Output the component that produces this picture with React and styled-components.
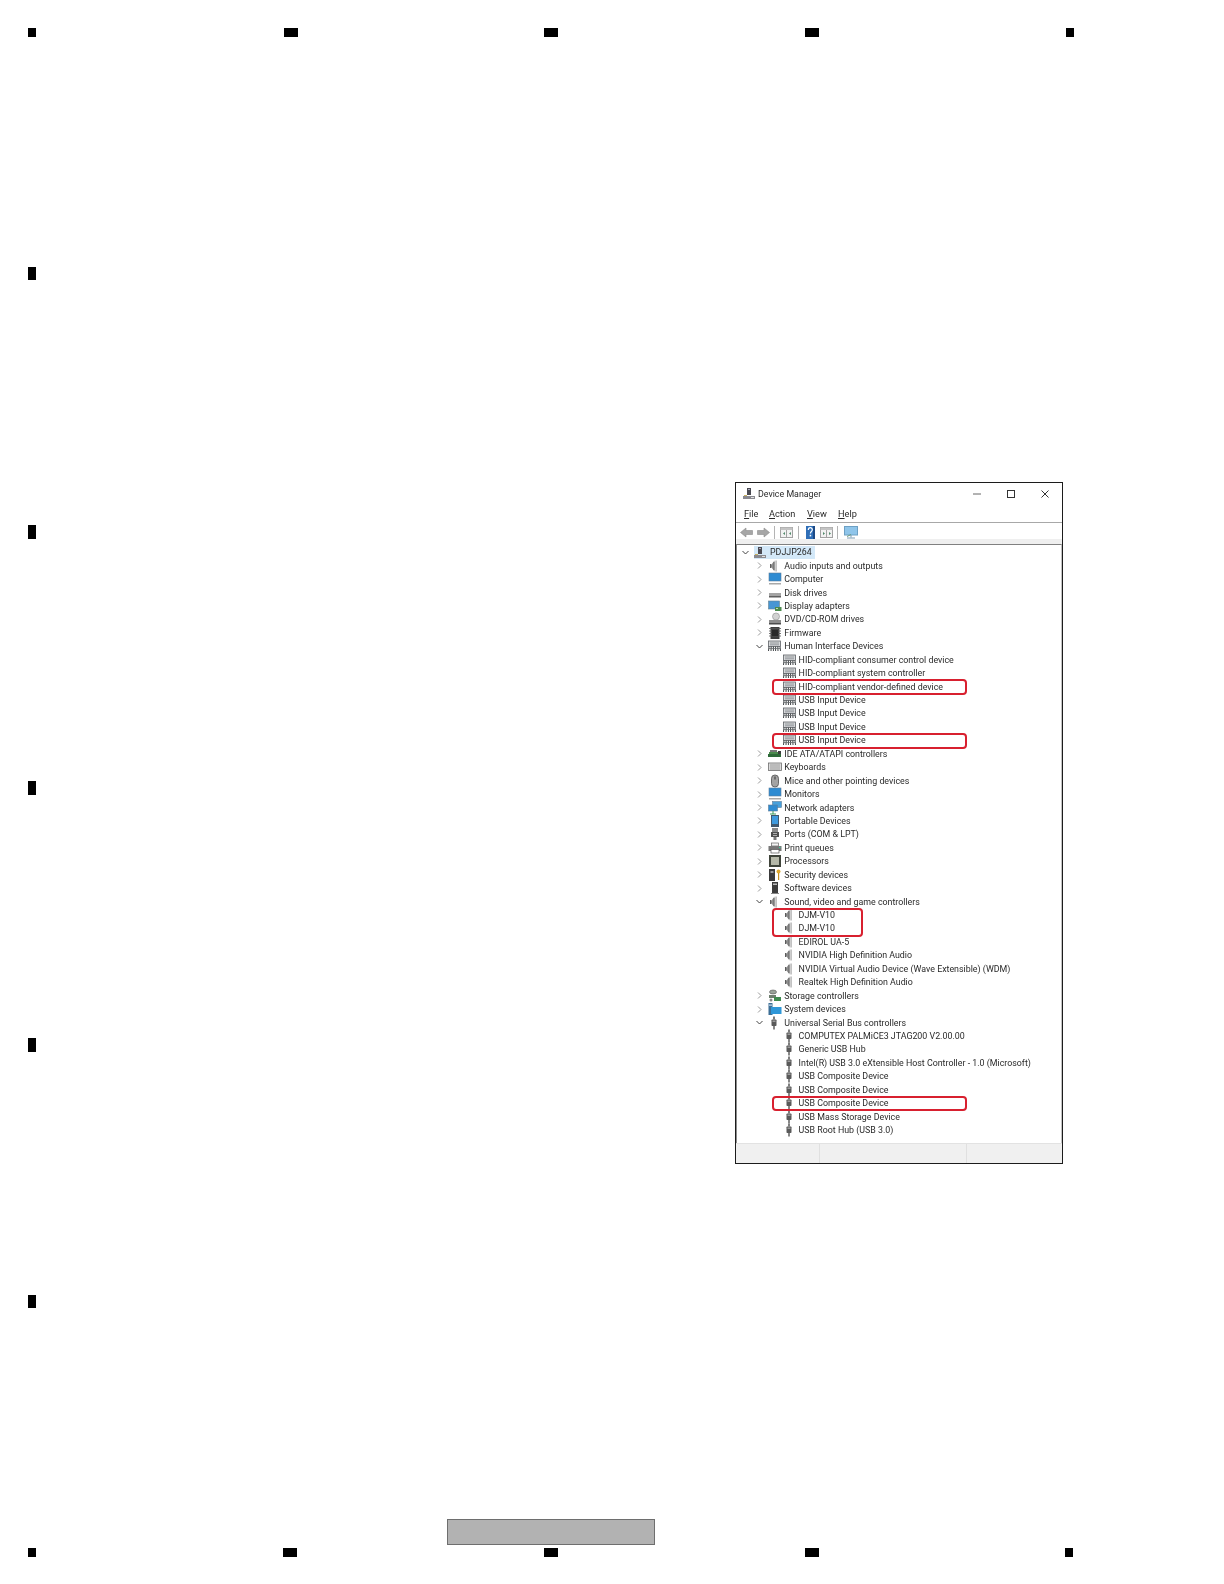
import React from 'react';
import styled, { createGlobalStyle } from 'styled-components';

const Global = createGlobalStyle`
    html, body {
        margin: 0;
        padding: 0;
        background: #fff;
    }
`;

const Sheet = styled.div`
    width: 1224px;
    height: 1584px;
    padding: 28px 0 0 28px;
    box-sizing: border-box;
    overflow: hidden;
    background: #fff;
`;

const MarkRow = styled.div`
    display: grid;
    grid-template-columns: ${props => props.$cols};
    justify-items: start;
`;

const Mark = styled.div`
    width: ${props => props.$w}px;
    height: ${props => props.$h}px;
    margin-top: ${props => props.$top || 0}px;
    background: #000;
`;

const Middle = styled.div`
    display: flex;
    align-items: flex-start;
    height: 1482px;
`;

const LeftRail = styled.div`
    width: 8px;
    flex: none;
`;

const PageBar = styled.div`
    width: 208px;
    height: 26px;
    margin: 0 0 3px 419px;
    box-sizing: border-box;
    background: #b2b2b2;
    border: 1px solid #6e6e6e;
`;

const Window = styled.div`
    width: 328px;
    height: 682px;
    margin: 445px 0 0 699px;
    flex: none;
    box-sizing: border-box;
    display: flex;
    flex-direction: column;
    border: 1px solid #1c1c1c;
    background: #fff;
    font-family: "Roboto", "Liberation Sans", sans-serif;
    font-size: 8.85px;
    color: #2a2a2a;
    filter: blur(0.35px);
`;

const TitleBar = styled.div`
    height: 21px;
    flex: none;
    display: flex;
    align-items: center;
    padding: 0 0 0 7px;
    gap: 3px;
`;

const Title = styled.span`
    flex: 1;
`;

const Controls = styled.div`
    display: flex;
    align-items: center;
    gap: 26px;
    padding-right: 13px;
`;

const MenuBar = styled.div`
    height: 18px;
    flex: none;
    display: flex;
    align-items: center;
    padding-left: 8px;
`;

const MenuItem = styled.span`
    width: ${props => props.$w}px;
    font-size: 9.2px;
    u {
        text-underline-offset: 1px;
    }
`;

const ToolBar = styled.div`
    height: 17px;
    flex: none;
    box-sizing: border-box;
    display: flex;
    align-items: center;
    gap: 4px;
    padding: 2px 0 0 4px;
    border-top: 1px solid #a8a8a8;
`;

const ToolSlot = styled.div`
    flex: none;
    margin-left: ${props => props.$ml || 0}px;
`;

const ToolSep = styled.div`
    width: 1px;
    height: 13px;
    flex: none;
    margin-left: ${props => props.$ml || 0}px;
    background: #b4b4b4;
`;

const ToolGap = styled.div`
    height: 5px;
    flex: none;
    background: #efefef;
`;

const TreePanel = styled.div`
    flex: 1;
    min-height: 0;
    box-sizing: border-box;
    border-top: 1.5px solid #808080;
    border-left: 1px solid #8c8c8c;
    border-right: 1px solid #c4c4c4;
    padding-top: 0.5px;
`;

const Row = styled.div`
    height: 13.44px;
    display: flex;
    align-items: center;
    white-space: nowrap;
    padding-left: ${props => 5 + props.$level * 14.3}px;
`;

const ChevronSlot = styled.span`
    width: 12px;
    flex: none;
    display: flex;
    align-items: center;
`;

const Label = styled.span`
    display: flex;
    align-items: center;
    height: 13.44px;
    gap: 2px;
    padding-right: ${props => (props.$selected ? 3 : 0)}px;
    background: ${props => (props.$selected ? '#d3e8f8' : 'transparent')};
`;

const IconSlot = styled.span`
    width: 14px;
    height: 13px;
    flex: none;
    display: flex;
    align-items: center;
    justify-content: flex-start;
`;

const RingGroup = styled.div`
    position: relative;
`;

const Ring = styled.div`
    position: absolute;
    top: -0.7px;
    bottom: -1.5px;
    left: 35px;
    width: ${props => props.$w}px;
    box-sizing: border-box;
    border: 2px solid #d8202f;
    border-radius: 4px;
`;

const StatusBar = styled.div`
    height: 19px;
    flex: none;
    display: grid;
    grid-template-columns: 84px 147px 1fr;
    background: #f0f0f0;
    border-top: 1px solid #e2e2e2;
`;

const StatusCell = styled.div`
    border-right: 1px solid #e0e0e0;
    &:last-child {
        border-right: none;
    }
`;

const Svg = ({ children, w = 14, h = 14 }) => (
    <svg width={w} height={h} viewBox={`0 0 ${w} ${h}`} style={{ display: 'block', flex: 'none' }}>
        {children}
    </svg>
);

const Chevron = ({ open }) => (
    <svg width="7" height="7" viewBox="0 0 7 7" style={{ display: 'block' }}>
        <path d={open ? 'M0.500 2l3 3 3-3' : 'M2 0.500l3 3-3 3'} fill="none" stroke={open ? '#444' : '#9a9a9a'} strokeWidth="1" />
    </svg>
);

const Tower = () => (
    <Svg w={12} h={13}>
        <rect x="4" y="1" width="4" height="7" fill="#4a4a52" />
        <rect x="5" y="2" width="2" height="1" fill="#aab" />
        <rect x="0" y="9" width="12" height="3" fill="#8a8a90" />
        <rect x="1" y="8" width="3" height="1" fill="#c8b060" />
        <rect x="8" y="10" width="3" height="1" fill="#e0e0e0" />
    </Svg>
);

const Speaker = () => (
    <Svg>
        <path d="M2 5.500h1.500L6.500 1.500v11L3.500 8.500H2z" fill="#8f8f8f" />
        <rect x="2" y="5" width="1.200" height="4" fill="#5c5c5c" />
        <rect x="7.200" y="1.500" width="1.800" height="11" fill="#c2c2c2" />
        <rect x="5.500" y="3" width="1" height="8" fill="#666" />
    </Svg>
);

const Computer = () => (
    <Svg>
        <rect x="1" y="1" width="12" height="8" fill="#2d8bd2" stroke="#5d7d99" strokeWidth="0.6" />
        <rect x="1" y="11" width="12" height="1.500" fill="#a8a8a8" />
    </Svg>
);

const Disk = () => (
    <Svg>
        <rect x="1" y="7" width="12" height="3.500" fill="#a4a4a4" />
        <rect x="1" y="10" width="12" height="1.500" fill="#5f5f5f" />
    </Svg>
);

const Display = () => (
    <Svg>
        <rect x="0.500" y="2" width="11" height="8" fill="#4796d4" stroke="#64808f" strokeWidth="0.6" />
        <rect x="7" y="8" width="6.500" height="4" fill="#4b8a4d" />
        <rect x="8" y="9" width="2" height="1" fill="#c2d8b0" />
    </Svg>
);

const Dvd = () => (
    <Svg>
        <circle cx="8" cy="4.500" r="3.500" fill="#d2d2d2" stroke="#8c8c8c" strokeWidth="0.6" />
        <rect x="1" y="8" width="12" height="4" fill="#8d8d8d" />
        <rect x="1" y="11" width="12" height="1.500" fill="#4d4d4d" />
    </Svg>
);

const Chip = () => (
    <Svg>
        <rect x="2.500" y="1" width="9" height="12" fill="#3e3e3e" />
        <path d="M1 2.500h12M1 5h12M1 7.500h12M1 10h12" stroke="#555" strokeWidth="0.8" />
        <rect x="4" y="4" width="6" height="6" fill="#2a2a2a" />
    </Svg>
);

const Hid = () => (
    <Svg w={13} h={14}>
        <rect x="0.500" y="2" width="12" height="5.500" fill="#d6d8da" stroke="#5e6265" strokeWidth="0.8" />
        <path d="M2 4h9M2 5.800h9" stroke="#84888b" strokeWidth="0.8" />
        <path d="M1 7.500L0.500 12M3.200 7.500L3 12M5.400 7.500V12M7.600 7.500V12M9.800 7.500L10 12M12 7.500l.5 4.500" stroke="#3f4346" strokeWidth="1" />
        <path d="M0.500 9.500h12" stroke="#6a6e71" strokeWidth="0.8" />
    </Svg>
);

const Ide = () => (
    <Svg>
        <rect x="1" y="5" width="9" height="5" fill="#4b8a4d" />
        <rect x="0" y="7" width="13" height="3" fill="#2e6a38" />
        <rect x="2" y="3" width="7" height="2" fill="#777" />
        <rect x="10" y="4" width="3" height="3" fill="#3d3d3d" />
    </Svg>
);

const Keyboard = () => (
    <Svg>
        <rect x="0.500" y="3" width="13" height="7.500" fill="#dcdcdc" stroke="#6e6e6e" strokeWidth="0.8" />
        <path d="M2 5h10M2 7h10M2 9h10" stroke="#8a8a8a" strokeWidth="0.8" />
    </Svg>
);

const Mouse = () => (
    <Svg>
        <rect x="3.500" y="1" width="7" height="12" rx="3.400" fill="#a3a3a3" stroke="#4e4e4e" strokeWidth="0.8" />
        <rect x="6.500" y="2.500" width="1" height="3" fill="#333" />
    </Svg>
);

const Network = () => (
    <Svg>
        <rect x="4.500" y="0.500" width="9" height="6" fill="#46a0dc" stroke="#5d7d99" strokeWidth="0.6" />
        <rect x="0.500" y="4" width="9" height="6" fill="#2d8bd2" stroke="#5d7d99" strokeWidth="0.6" />
        <path d="M5 10v3M2 13h6" stroke="#3d9a5c" strokeWidth="1" />
    </Svg>
);

const Portable = () => (
    <Svg>
        <rect x="3" y="1" width="8" height="12" fill="#40586e" />
        <rect x="4" y="2" width="6" height="8" fill="#3f9ade" />
    </Svg>
);

const Port = () => (
    <Svg>
        <rect x="4" y="1" width="6" height="4" fill="#8a8a8a" />
        <rect x="3" y="5" width="8" height="5" fill="#4e4e4e" />
        <path d="M5 6.500h4M5 8.500h4" stroke="#c8c8c8" strokeWidth="0.8" />
        <rect x="5.500" y="10" width="3" height="3" fill="#777" />
    </Svg>
);

const Printer = () => (
    <Svg>
        <rect x="3.500" y="2" width="7" height="3" fill="#f4f4f4" stroke="#666" strokeWidth="0.7" />
        <rect x="0.500" y="5" width="13" height="5" fill="#777" />
        <rect x="3" y="8.500" width="8" height="3.500" fill="#fff" stroke="#555" strokeWidth="0.7" />
        <rect x="11" y="6" width="1.500" height="1" fill="#3c9" />
    </Svg>
);

const Processor = () => (
    <Svg>
        <rect x="1" y="1" width="12" height="12" fill="#3f443a" />
        <rect x="3" y="3" width="8" height="8" fill="#b5b8a8" />
    </Svg>
);

const Security = () => (
    <Svg>
        <rect x="1" y="1" width="6" height="12" fill="#3a3a3a" />
        <rect x="2.500" y="3" width="3" height="2" fill="#9a9a9a" />
        <circle cx="10.500" cy="3.500" r="2" fill="#e0a92e" />
        <rect x="10" y="5" width="1.200" height="7" fill="#c48f20" />
    </Svg>
);

const Software = () => (
    <Svg>
        <rect x="4" y="1" width="6" height="12" fill="#3c3c3c" />
        <rect x="5" y="2.500" width="4" height="1.500" fill="#bbb" />
        <rect x="3" y="12" width="8" height="1" fill="#888" />
    </Svg>
);

const Storage = () => (
    <Svg>
        <ellipse cx="5" cy="3" rx="3.500" ry="2" fill="#9aa39a" stroke="#555" strokeWidth="0.6" />
        <rect x="1" y="6" width="7" height="3" fill="#6f7f6f" />
        <rect x="6" y="8" width="7" height="4" fill="#3f8a4f" />
        <circle cx="3" cy="11" r="1.500" fill="#888" />
    </Svg>
);

const SystemIcon = () => (
    <Svg>
        <rect x="0.500" y="1" width="4" height="12" fill="#3c6f96" />
        <rect x="3" y="5" width="10.500" height="7" fill="#2f97d8" />
        <rect x="1" y="2.500" width="3" height="1.200" fill="#cde" />
    </Svg>
);

const Usb = () => (
    <Svg>
        <rect x="5" y="0.500" width="2" height="3" fill="#7d7d7d" />
        <rect x="3.500" y="3.500" width="5" height="6.500" rx="0.800" fill="#5a5a5a" />
        <rect x="4.500" y="4.500" width="3" height="1.500" fill="#9c9c9c" />
        <rect x="5.200" y="10" width="1.600" height="3.500" fill="#6a6a6a" />
    </Svg>
);

const Back = ({ flip }) => (
    <svg width="13" height="11" viewBox="0 0 13 11" style={{ display: 'block', transform: flip ? 'scaleX(-1)' : 'none' }}>
        <path d="M0.500 5.500L6 1v2.500h6.500v4H6V10z" fill="#a6a6a6" stroke="#8c8c8c" strokeWidth="0.6" />
    </svg>
);

const PaneIcon = ({ right }) => (
    <svg width="13" height="11" viewBox="0 0 13 11" style={{ display: 'block' }}>
        <rect x="0.500" y="0.500" width="12" height="10" fill="#f2f2f2" stroke="#a2a2a2" />
        <rect x="0.500" y="0.500" width="12" height="2.500" fill="#c4c4c4" />
        <rect x="6" y="3" width="1" height="7" fill="#a2a2a2" />
        <path d={right ? 'M3 5v3l2-1.500zM9 5v3l2-1.500z' : 'M5 5v3l-2-1.500zM11 5v3l-2-1.500z'} fill="#4f8a6a" />
    </svg>
);

const HelpIcon = () => (
    <svg width="9" height="13" viewBox="0 0 9 13" style={{ display: 'block' }}>
        <rect width="9" height="13" fill="#2f6fb8" />
        <rect x="7" width="2" height="13" fill="#1d4a86" />
        <path d="M2.300 4c0-3 4-3 4-.3 0 1.800-1.900 1.800-1.900 3.800" fill="none" stroke="#fff" strokeWidth="1.200" />
        <rect x="3.700" y="8.800" width="1.500" height="1.600" fill="#fff" />
    </svg>
);

const ScanIcon = () => (
    <svg width="14" height="13" viewBox="0 0 14 13" style={{ display: 'block' }}>
        <rect x="0.500" y="0.500" width="13" height="8.500" fill="#8fc5ea" stroke="#6da0c4" />
        <path d="M7 9v2.500M3 12h8" stroke="#7d9db4" strokeWidth="1" />
        <path d="M3 10.500l4-2" stroke="#6c9a7c" strokeWidth="1" />
    </svg>
);

const Minimize = () => (
    <svg width="8" height="8" viewBox="0 0 8 8" style={{ display: 'block' }}>
        <path d="M0 4h8" stroke="#666" strokeWidth="1" />
    </svg>
);

const Maximize = () => (
    <svg width="8" height="8" viewBox="0 0 8 8" style={{ display: 'block' }}>
        <rect x="0.500" y="0.500" width="7" height="7" fill="none" stroke="#333" strokeWidth="1" />
    </svg>
);

const Close = () => (
    <svg width="8" height="8" viewBox="0 0 8 8" style={{ display: 'block' }}>
        <path d="M0.500 0.500l7 7M7.500 0.500l-7 7" stroke="#333" strokeWidth="1" />
    </svg>
);

const node = (level, name, Icon, open) => ({ level, name, Icon, open });

const hid = ['HID-compliant consumer control device', 'HID-compliant system controller'];
const usbRoot = ['COMPUTEX PALMiCE3 JTAG200 V2.00.00', 'Generic USB Hub', 'Intel(R) USB 3.0 eXtensible Host Controller - 1.0 (Microsoft)', 'USB Composite Device', 'USB Composite Device'];

// each entry is a run of rows, ringW draws the red box round that run
const groups = [
    { rows: [
        node(1, 'Audio inputs and outputs', Speaker, false),
        node(1, 'Computer', Computer, false),
        node(1, 'Disk drives', Disk, false),
        node(1, 'Display adapters', Display, false),
        node(1, 'DVD/CD-ROM drives', Dvd, false),
        node(1, 'Firmware', Chip, false),
        node(1, 'Human Interface Devices', Hid, true),
        ...hid.map(n => node(2, n, Hid)),
    ] },
    { ringW: 195, rows: [node(2, 'HID-compliant vendor-defined device', Hid)] },
    { rows: [1, 2, 3].map(() => node(2, 'USB Input Device', Hid)) },
    { ringW: 195, rows: [node(2, 'USB Input Device', Hid)] },
    { rows: [
        node(1, 'IDE ATA/ATAPI controllers', Ide, false),
        node(1, 'Keyboards', Keyboard, false),
        node(1, 'Mice and other pointing devices', Mouse, false),
        node(1, 'Monitors', Computer, false),
        node(1, 'Network adapters', Network, false),
        node(1, 'Portable Devices', Portable, false),
        node(1, 'Ports (COM & LPT)', Port, false),
        node(1, 'Print queues', Printer, false),
        node(1, 'Processors', Processor, false),
        node(1, 'Security devices', Security, false),
        node(1, 'Software devices', Software, false),
        node(1, 'Sound, video and game controllers', Speaker, true),
    ] },
    { ringW: 91, rows: [node(2, 'DJM-V10', Speaker), node(2, 'DJM-V10', Speaker)] },
    { rows: [
        node(2, 'EDIROL UA-5', Speaker),
        node(2, 'NVIDIA High Definition Audio', Speaker),
        node(2, 'NVIDIA Virtual Audio Device (Wave Extensible) (WDM)', Speaker),
        node(2, 'Realtek High Definition Audio', Speaker),
        node(1, 'Storage controllers', Storage, false),
        node(1, 'System devices', SystemIcon, false),
        node(1, 'Universal Serial Bus controllers', Usb, true),
        ...usbRoot.map(n => node(2, n, Usb)),
    ] },
    { ringW: 195, rows: [node(2, 'USB Composite Device', Usb)] },
    { rows: [node(2, 'USB Mass Storage Device', Usb), node(2, 'USB Root Hub (USB 3.0)', Usb)] },
];

const TreeRow = ({ level, name, Icon, open, selected }) => (
    <Row $level={level}>
        <ChevronSlot>{open !== undefined && <Chevron open={open} />}</ChevronSlot>
        <Label $selected={selected}>
            <IconSlot><Icon /></IconSlot>
            <span>{name}</span>
        </Label>
    </Row>
);

const leftMarks = [
    { top: 230, h: 13 },
    { top: 245, h: 14 },
    { top: 242, h: 14 },
    { top: 243, h: 14 },
    { top: 243, h: 13 },
];

const DeviceManager = () => (
    <Window>
        <TitleBar>
            <Tower />
            <Title>Device Manager</Title>
            <Controls>
                <Minimize />
                <Maximize />
                <Close />
            </Controls>
        </TitleBar>
        <MenuBar>
            <MenuItem $w={25}><u>F</u>ile</MenuItem>
            <MenuItem $w={38}><u>A</u>ction</MenuItem>
            <MenuItem $w={31}><u>V</u>iew</MenuItem>
            <MenuItem $w={30}><u>H</u>elp</MenuItem>
        </MenuBar>
        <ToolBar>
            <ToolSlot><Back /></ToolSlot>
            <ToolSlot><Back flip /></ToolSlot>
            <ToolSep />
            <ToolSlot $ml={1}><PaneIcon /></ToolSlot>
            <ToolSep $ml={1} />
            <ToolSlot $ml={3}><HelpIcon /></ToolSlot>
            <ToolSlot $ml={1}><PaneIcon right /></ToolSlot>
            <ToolSep />
            <ToolSlot $ml={2}><ScanIcon /></ToolSlot>
        </ToolBar>
        <ToolGap />
        <TreePanel>
            <TreeRow level={0} name="PDJJP264" Icon={Tower} open={true} selected />
            {groups.map((group, i) => {
                const rows = group.rows.map((r, j) => <TreeRow key={j} {...r} />);
                if (!group.ringW) return <React.Fragment key={i}>{rows}</React.Fragment>;
                return (
                    <RingGroup key={i}>
                        {rows}
                        <Ring $w={group.ringW} />
                    </RingGroup>
                );
            })}
        </TreePanel>
        <StatusBar>
            <StatusCell />
            <StatusCell />
            <StatusCell />
        </StatusBar>
    </Window>
);

const App = () => (
    <Sheet>
        <Global />
        <MarkRow $cols="256px 260px 261px 261px auto">
            <Mark $w={8} $h={9} />
            <Mark $w={14} $h={9} />
            <Mark $w={14} $h={9} />
            <Mark $w={14} $h={9} />
            <Mark $w={8} $h={9} />
        </MarkRow>
        <Middle>
            <LeftRail>
                {leftMarks.map((m, i) => <Mark key={i} $w={8} $h={m.h} $top={m.top} />)}
            </LeftRail>
            <DeviceManager />
        </Middle>
        <PageBar />
        <MarkRow $cols="255px 261px 261px 260px auto">
            <Mark $w={8} $h={9} />
            <Mark $w={14} $h={9} />
            <Mark $w={14} $h={9} />
            <Mark $w={14} $h={9} />
            <Mark $w={8} $h={9} />
        </MarkRow>
    </Sheet>
);

export default App;
